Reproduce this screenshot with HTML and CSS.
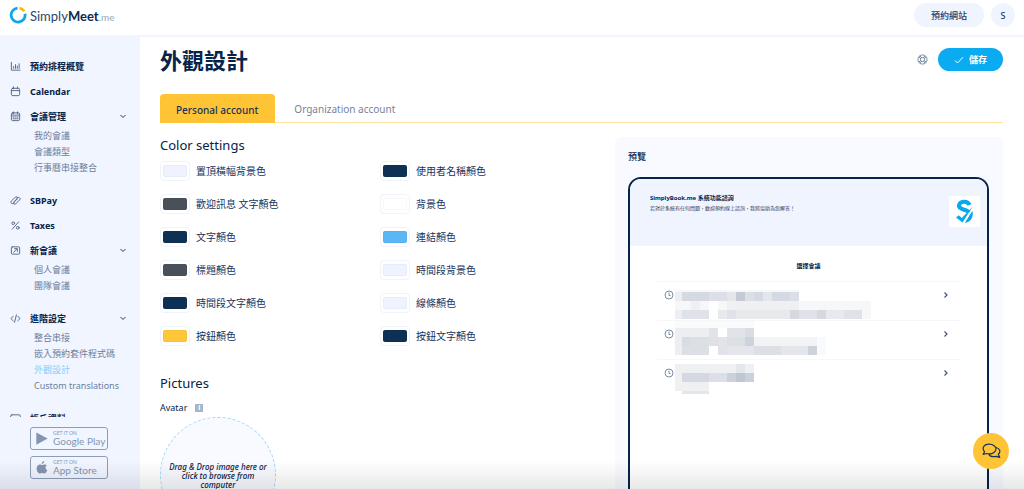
FILE: index.html
```html
<!DOCTYPE html>
<html lang="zh-Hant">
<head>
<meta charset="utf-8">
<meta name="viewport" content="width=device-width, initial-scale=1">
<title>外觀設計</title>
<link rel="stylesheet" href="styles.css">
</head>
<body>
<header class="topbar">
  <a class="brand" href="#">
    <svg class="brand-mark" viewBox="0 0 18 18" fill="none" stroke-width="2.8"><path d="M15.200 5.200A7 7 0 0 0 10.400 2.200" stroke="#fdb714"/><path d="M8.600 2.100A7 7 0 1 0 16 7.800" stroke="#12a5ea"/></svg>
    <span class="brand-text">Simply<b>Meet</b><small>.me</small></span>
  </a>
  <div class="topbar-actions">
    <button class="pill" type="button">預約網站</button>
    <button class="pill round" type="button">S</button>
  </div>
</header>
<div class="shell">
  <aside class="sidebar">
    <nav class="nav">
      <ul class="nav-list">
        <li><a class="nav-item" href="#"><svg class="ico" viewBox="0 0 12 12"><path d="M1.500 1.500v8.500h9.500M4 8V6M6 8V4M8 8V5.500M10 8V3"/></svg>預約排程概覽</a></li>
        <li><a class="nav-item" href="#"><svg class="ico" viewBox="0 0 12 12"><rect x="1.500" y="2.500" width="9" height="8" rx="1.500"/><path d="M1.500 5h9M3.800 1v2M8.200 1v2"/></svg>Calendar</a></li>
        <li><button class="nav-item" type="button"><svg class="ico" viewBox="0 0 12 12"><rect x="1.500" y="2" width="9" height="8.500" rx="1.500"/><path d="M1.500 4.500h9M3.800 1v2M8.200 1v2M3.200 6.500h1.200M5.400 6.500h1.200M7.600 6.500h1.200M3.200 8.500h1.200M5.400 8.500h1.200M7.600 8.500h1.200"/></svg>會議管理<svg class="chev" viewBox="0 0 8 8"><path d="M1.500 3L4 5.500 6.500 3"/></svg></button>
          <ul class="sub"><li><a href="#">我的會議</a></li><li><a href="#">會議類型</a></li><li><a href="#">行事曆串接整合</a></li></ul></li>
        <li><a class="nav-item" href="#"><svg class="ico" viewBox="0 0 12 12"><path d="M4.500 8.700L2.900 9.300C1 9.600.4 7.600 1.600 6.500L5.800 2.300c1.500-1.200 3 .3 1.900 1.700L4.200 7.500M7.500 3.300l1.600-.6c1.900-.3 2.500 1.700 1.300 2.800L6.200 9.700c-1.500 1.200-3-.3-1.900-1.700L7.800 4.500"/></svg>SBPay</a></li>
        <li><a class="nav-item" href="#"><svg class="ico" viewBox="0 0 12 12"><circle cx="3.500" cy="3.500" r="1.500"/><circle cx="8.500" cy="8.500" r="1.500"/><path d="M9.500 2L2.500 10"/></svg>Taxes</a></li>
        <li><button class="nav-item" type="button"><svg class="ico" viewBox="0 0 12 12"><rect x="1.500" y="2" width="9" height="8" rx="1"/><path d="M4 8l3.500-3.800M5 4h3v3"/></svg>新會議<svg class="chev" viewBox="0 0 8 8"><path d="M1.500 3L4 5.500 6.500 3"/></svg></button>
          <ul class="sub"><li><a href="#">個人會議</a></li><li><a href="#">團隊會議</a></li></ul></li>
        <li><button class="nav-item" type="button"><svg class="ico" viewBox="0 0 12 12"><path d="M3.500 3.500L1 6l2.500 2.500M8.500 3.500L11 6 8.500 8.500M7 2L5 10"/></svg>進階設定<svg class="chev" viewBox="0 0 8 8"><path d="M1.500 3L4 5.500 6.500 3"/></svg></button>
          <ul class="sub"><li><a href="#">整合串接</a></li><li><a href="#">嵌入預約套件程式碼</a></li><li><a class="current" href="#" aria-current="page">外觀設計</a></li><li><a href="#">Custom translations</a></li></ul></li>
        <li><button class="nav-item" type="button"><svg class="ico" viewBox="0 0 12 12"><rect x=".8" y="2" width="10.400" height="8" rx="1.200"/><path d="M3 8V5.500h2V8M7 5h2.500M7 7h2.500"/></svg>帳戶資料<svg class="chev" viewBox="0 0 8 8"><path d="M1.500 3L4 5.500 6.500 3"/></svg></button></li>
      </ul>
    </nav>
    <div class="stores">
      <a class="store" href="#"><svg viewBox="0 0 16 16"><path d="M1.500 1L14.500 8 1.500 15z"/></svg><span><small>GET IT ON</small>Google Play</span></a>
      <a class="store" href="#"><svg viewBox="0 0 16 16"><path d="M10.600.5c.1 1.600-1.200 3.300-2.900 3.300C7.500 2.200 9 .7 10.600.5zM13.600 5.400c-2.300 1.400-1.900 4.600.5 5.500-.5 1.500-1.900 4-3.300 4-1 0-1.400-.6-2.600-.6s-1.700.6-2.600.6C3.600 14.900 1.600 11.500 1.900 8.500c.2-2.500 1.900-4 3.700-4 1.100 0 1.900.7 2.700.7.700 0 1.700-.8 3.100-.7.900.1 1.700.4 2.200.9z"/></svg><span><small>GET IT ON</small>App Store</span></a>
    </div>
  </aside>
  <main class="main">
    <div class="page-head">
      <h1>外觀設計</h1>
      <div class="head-actions">
        <button class="help" type="button" aria-label="Help"><svg viewBox="0 0 12 12"><circle cx="6" cy="6" r="5"/><circle cx="6" cy="6" r="2.300"/><path d="M2 3.300l2 1.500M3.300 2l1.500 2M10 3.300L8 4.800M8.700 2L7.200 4M2 8.700l2-1.500M3.300 10l1.500-2M10 8.700L8 7.200M8.700 10L7.200 8"/></svg></button>
        <button class="save" type="button"><svg viewBox="0 0 10 10"><path d="M1 5.500L3.500 8 9 2.200"/></svg>儲存</button>
      </div>
    </div>
    <div class="tabs" role="tablist">
      <button class="tab active" role="tab" aria-selected="true" type="button">Personal account</button>
      <button class="tab" role="tab" aria-selected="false" type="button">Organization account</button>
    </div>
    <div class="columns">
      <div class="settings">
        <h2>Color settings</h2>
        <div class="colors">
          <label><input type="color" value="#eff3ff">置頂橫幅背景色</label>
          <label><input type="color" value="#0d3054">使用者名稱顏色</label>
          <label><input type="color" value="#485059">歡迎訊息 文字顏色</label>
          <label><input type="color" value="#ffffff">背景色</label>
          <label><input type="color" value="#0d3054">文字顏色</label>
          <label><input type="color" value="#5ab6f5">連結顏色</label>
          <label><input type="color" value="#485059">標題顏色</label>
          <label><input type="color" value="#eff3ff">時間段背景色</label>
          <label><input type="color" value="#0d3054">時間段文字顏色</label>
          <label><input type="color" value="#eff3ff">線條顏色</label>
          <label><input type="color" value="#ffc63a">按鈕顏色</label>
          <label><input type="color" value="#0d3054">按鈕文字顏色</label>
        </div>
        <h2 class="pictures-title">Pictures</h2>
        <div class="avatar-label">Avatar <span class="info">i</span></div>
        <button class="dropzone" type="button">Drag &amp; Drop image here or click to browse from computer</button>
      </div>
      <section class="preview">
        <h3>預覽</h3>
        <div class="device">
          <div class="device-head">
            <div class="device-text"><h4>SimplyBook.me 系統功能諮詢</h4><p>若對於系統有任何問題，歡迎預約線上諮詢，我將協助為您解答！</p></div>
            <svg class="company" viewBox="0 0 31 31"><path d="M20.500 9C19 4.600 10 4.500 10 9.800c0 4.400 8.500 3.200 9.600 6.400" fill="none" stroke="#08a8f0" stroke-width="4.200"/><path d="M7 21.500l2.800-2.200 3 2.700L23.800 10.500 13.500 26.500z" fill="#08a8f0"/><path d="M23.200 14.500c1.500 4.500.3 11.500-7.700 12.500z" fill="#08a8f0"/><path d="M24.500 12L14.600 27.500" stroke="#fff" stroke-width="1.100"/></svg>
          </div>
          <h4 class="choose">選擇會議</h4>
          <ul class="meetings">
            <li><svg class="clock" viewBox="0 0 10 10"><circle cx="5" cy="5" r="4"/><path d="M5 2.500v3h1.500"/></svg>
              <svg class="mosaic" viewBox="0 0 196 39" shape-rendering="crispEdges"><path fill="#f6f7f8" d="M0 8h124v3H0zM0 19h196v18H0z"/><path fill="#eceef1" d="M0 10h7v9H0zM0 28h7v9H0z"/><path fill="#d4d9e2" d="M7 10h27v9H7zM79 10h9v9h-9zM97 10h18v9H97z"/><path fill="#dcdfe6" d="M34 10h18v9H34zM70 10h9v9h-9zM115 10h9v9h-9z"/><path fill="#e5e6ea" d="M52 10h9v9h-9zM88 10h9v9h-9z"/><path fill="#c4cbd6" d="M61 10h9v9h-9z"/><path fill="#fff" d="M34 19h9v18h-9z"/><path fill="#eff0f2" d="M16 19h9v9h-9zM52 19h72v9H52z"/><path fill="#dfe2e8" d="M7 28h27v9H7zM52 28h9v9h-9zM124 28h18v9h-18zM169 28h18v9h-18z"/><path fill="#e7e9ed" d="M43 28h9v9h-9zM61 28h54v9H61zM151 28h18v9h-18z"/><path fill="#d5d8df" d="M115 28h9v9h-9zM142 28h9v9h-9z"/></svg>
              <svg class="arrow" viewBox="0 0 8 8"><path d="M2.500 1.500L5 4 2.500 6.500"/></svg></li>
            <li><svg class="clock" viewBox="0 0 10 10"><circle cx="5" cy="5" r="4"/><path d="M5 2.500v3h1.500"/></svg>
              <svg class="mosaic" viewBox="0 0 196 39" shape-rendering="crispEdges"><path fill="#f9fafb" d="M0 0h79v16H0zM0 16h151v18H0z"/><path fill="#eceef1" d="M0 7h34v9H0zM0 16h7v18H0zM52 7h9v9h-9z"/><path fill="#e2e3e8" d="M34 7h9v9h-9zM52 7h18v9H52zM43 16h9v18h-9z"/><path fill="#d7dde2" d="M70 7h9v9h-9zM7 16h9v9H7z"/><path fill="#dce0e5" d="M16 16h18v9H16zM52 16h18v9H52zM7 25h27v9H7zM79 25h27v9H79z"/><path fill="#ccd3dd" d="M70 16h9v9h-9zM133 25h9v9h-9z"/><path fill="#e4e6eb" d="M52 25h27v9H52zM106 25h27v9h-27z"/><path fill="#f1f3f5" d="M79 16h63v9H79z"/><path fill="#e0e0e5" d="M34 16h9v9h-9z"/><path fill="#fff" d="M43 7h9v9h-9zM34 25h9v9h-9z"/></svg>
              <svg class="arrow" viewBox="0 0 8 8"><path d="M2.500 1.500L5 4 2.500 6.500"/></svg></li>
            <li><svg class="clock" viewBox="0 0 10 10"><circle cx="5" cy="5" r="4"/><path d="M5 2.500v3h1.500"/></svg>
              <svg class="mosaic" viewBox="0 0 196 39" shape-rendering="crispEdges"><path fill="#eef0f2" d="M0 4h79v9H0zM0 13h7v18H0zM7 22h27v12H7z"/><path fill="#e3e6ea" d="M61 4h9v9h-9zM7 31h27v3H7z"/><path fill="#d3d8e1" d="M7 13h27v9H7z"/><path fill="#dcdfe7" d="M34 13h18v9H34z"/><path fill="#cbd1dc" d="M52 13h9v9h-9zM70 13h9v9h-9z"/><path fill="#bfc7d4" d="M61 13h9v9h-9z"/></svg>
              <svg class="arrow" viewBox="0 0 8 8"><path d="M2.500 1.500L5 4 2.500 6.500"/></svg></li>
          </ul>
        </div>
      </section>
    </div>
  </main>
</div>
<div class="fade"></div>
<button class="chat" type="button" aria-label="Chat"><svg viewBox="0 0 20 20"><path d="M2.200 13.500l1.300-2.800C.2 6.500 3.500 3.200 8 3.200s7 2.500 7 4.900-2.900 4.800-7 4.800c-1 0-1.800-.1-2.600-.4zM15 6.500c4 .8 5 4.400 2.300 6.800l1.500 3.100-3.700-1.100c-3 .8-6.200-.1-7.300-2.200"/></svg></button>
</body>
</html>
```
FILE: styles.css
```css
* { box-sizing: border-box; }
body {
  margin: 0;
  height: 100vh;
  display: flex;
  flex-direction: column;
  overflow: hidden;
  background: #fff;
  color: #06234a;
  font-family: "Noto Sans", "Noto Sans CJK TC", sans-serif;
  font-size: 10px;
}
button { font: inherit; color: inherit; border: 0; padding: 0; background: none; cursor: pointer; }
a { color: inherit; text-decoration: none; }
ul { list-style: none; margin: 0; padding: 0; }
h1, h2, h3, h4, p { margin: 0; }
svg { display: block; flex: none; }

.topbar {
  display: flex;
  align-items: center;
  justify-content: space-between;
  height: 37px;
  flex: none;
  padding: 0 9px 5px 9px;
  border-bottom: 2px solid #f1f5ff;
}
.brand { display: flex; align-items: center; gap: 3px; }
.brand-mark { width: 18px; height: 18px; }
.brand-text { font: 400 13px/18px Lato, sans-serif; color: #2c4567; padding-top: 2px; }
.brand-text b { font-weight: 700; color: #0b2a50; }
.brand-text small { font-size: 10px; color: #9aa7b8; }
.topbar-actions { display: flex; gap: 7px; }
.pill { height: 24px; padding: 0 17px; border-radius: 12px; background: #f0f4ff; color: #1c3a60; font-size: 9px; font-weight: 500; }
.pill.round { width: 24px; padding: 0; }

.shell { flex: 1; min-height: 0; display: flex; }
.sidebar { width: 140px; flex: none; display: flex; flex-direction: column; background: #f1f5ff; }
.nav { flex: 1; min-height: 0; overflow: hidden; padding-top: 17px; }
.nav-list { display: flex; flex-direction: column; gap: 1px; }
.nav-item {
  display: flex;
  align-items: center;
  gap: 9px;
  width: 100%;
  height: 24px;
  padding: 0 13px 0 10px;
  font-size: 9px;
  font-weight: 700;
  text-align: left;
}
.ico { width: 11px; height: 11px; fill: none; stroke: #4d6482; stroke-width: 1; stroke-linecap: round; stroke-linejoin: round; }
.chev { width: 8px; height: 8px; margin-left: auto; fill: none; stroke: #1d3b60; stroke-width: 1; }
.sub { padding: 0 0 11px 34px; font-size: 9px; line-height: 16px; color: #6b7f9c; white-space: nowrap; }
.sub .current { color: #86cdf8; }
.stores { flex: none; display: flex; flex-direction: column; gap: 6px; padding: 10px 32px 10px 30px; }
.store {
  display: flex;
  align-items: center;
  gap: 4px;
  height: 23px;
  padding: 0 4px;
  border: 1px solid #8d9db6;
  border-radius: 3px;
  color: #8495b0;
  font: 400 10px/11px Lato, sans-serif;
  white-space: nowrap;
}
.store svg { width: 14px; height: 15px; fill: currentColor; }
.store small { display: block; font-size: 5px; line-height: 6px; }

.main { flex: 1; min-width: 0; display: flex; flex-direction: column; padding: 0 21px 0 20px; }
.page-head { display: flex; align-items: center; justify-content: space-between; height: 45px; flex: none; }
h1 { font-size: 22px; line-height: 32px; font-weight: 700; }
.head-actions { display: flex; align-items: center; gap: 10px; }
.help svg { width: 11px; height: 11px; fill: none; stroke: #4d6482; stroke-width: .8; }
.save {
  display: flex;
  align-items: center;
  gap: 5px;
  height: 23px;
  padding: 0 16px;
  border-radius: 12px;
  background: #0aabf1;
  color: #fff;
  font-size: 9px;
  font-weight: 700;
}
.save svg { width: 10px; height: 10px; fill: none; stroke: #fff; stroke-width: 1; }

.tabs { display: flex; flex: none; margin-top: 12px; border-bottom: 1px solid #ffe1a0; }
.tab { height: 28px; padding: 2px 19px 0; font-size: 10px; color: #76849a; }
.tab.active { height: 29px; margin-bottom: -1px; padding: 2px 17px 0 16px; border-radius: 4px 4px 0 0; background: #ffc435; color: #16325a; font-weight: 500; }

.columns { flex: 1; min-height: 0; display: grid; grid-template-columns: minmax(0, 17fr) minmax(0, 15fr); gap: 15px; }
.settings { padding-top: 13px; overflow: hidden; }
h2 { font-size: 13px; line-height: 18px; font-weight: 400; }
.colors { display: grid; grid-template-columns: 1fr 1fr; row-gap: 13px; margin-top: 7px; }
.colors label { display: flex; align-items: center; gap: 6px; height: 20px; line-height: 22px; color: #16325a; }
.colors input {
  appearance: none;
  width: 30px;
  height: 20px;
  padding: 3px 2px;
  border: 1px solid #f0f3fa;
  border-radius: 4px;
  background: #fff;
}
.colors input::-webkit-color-swatch-wrapper { padding: 0; }
.colors input::-webkit-color-swatch { border: 1px solid rgba(0, 30, 100, .03); border-radius: 2px; }
.pictures-title { margin-top: 28px; }
.avatar-label { display: flex; align-items: center; gap: 8px; margin-top: 8px; font-size: 9px; line-height: 16px; }
.info { width: 8px; height: 8px; background: #a5b5ca; color: #fff; font-size: 7px; line-height: 8px; font-weight: 700; text-align: center; }
.dropzone {
  width: 116px;
  height: 116px;
  margin-top: 1px;
  padding: 0 6px;
  border: 1px dashed #a4d8f7;
  border-radius: 50%;
  background: #f8faff;
  font-size: 8px;
  line-height: 9px;
  font-style: italic;
  font-weight: 500;
}

.preview { display: flex; flex-direction: column; margin-top: 14px; padding: 12px 14px 0 13px; border-radius: 6px 6px 0 0; background: #f8faff; overflow: hidden; }
h3 { font-size: 9px; line-height: 16px; font-weight: 500; }
.device { flex: 1; margin-top: 12px; border: solid #06234a; border-width: 2px 2px 0; border-radius: 13px 13px 0 0; background: #fff; overflow: hidden; }
.device-head { display: flex; justify-content: space-between; height: 67px; padding: 14px 7px 0 20px; background: #f0f4ff; }
.device-head h4 { font-size: 6px; line-height: 10px; }
.device-head p { font-size: 5px; line-height: 10px; color: #33415a; }
.company { width: 31px; height: 31px; margin-top: 3px; background: #fff; }
.choose { padding: 16px 0 10px; font-size: 6px; line-height: 9px; text-align: center; }
.meetings { margin: 0 27px; }
.meetings li { display: flex; height: 39px; padding: 0 10px 0 7px; border-top: 1px solid #f7f7f9; }
.clock { width: 10px; height: 10px; margin-top: 8px; fill: none; stroke: #5d7190; stroke-width: .8; }
.mosaic { width: 196px; height: 39px; margin-left: 1px; }
.arrow { width: 8px; height: 8px; margin: 9px 0 0 auto; fill: none; stroke: #3f5878; stroke-width: 1.2; }

.fade { position: fixed; inset: auto 0 0; height: 28px; background: linear-gradient(transparent, rgba(0, 0, 0, .09)); pointer-events: none; }
.chat { position: fixed; right: 15px; bottom: 20px; display: grid; place-items: center; width: 36px; height: 36px; border-radius: 50%; background: #ffc435; }
.chat svg { width: 20px; height: 20px; fill: none; stroke: #16325a; stroke-width: 1.2; stroke-linejoin: round; }
```
